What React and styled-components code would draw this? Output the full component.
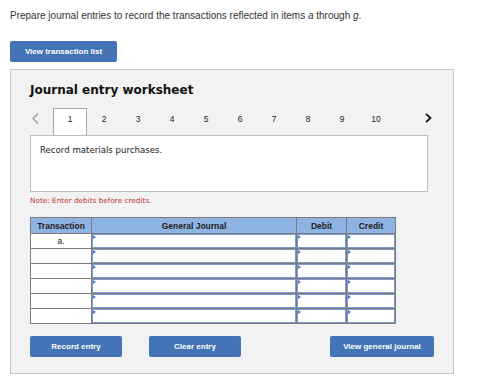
import React from "react";
import styled, { createGlobalStyle } from "styled-components";

const Global = createGlobalStyle`
  html, body { margin: 0; padding: 0; background: #fff; }
  body { font-family: "Liberation Sans", Arial, sans-serif; color: #222; }
  * { box-sizing: border-box; }
`;

const Page = styled.div`
  padding: 9px 0 0 10px;
  width: 490px;
`;

const Intro = styled.p`
  margin: 0;
  font-size: 10px;
  line-height: 13px;
  color: #333;
  em { font-style: italic; }
`;

const Button = styled.button`
  display: flex;
  align-items: center;
  justify-content: center;
  width: ${(p) => p.$w}px;
  height: 21px;
  padding: 0;
  border: none;
  border-radius: 2px;
  background: #4574b6;
  color: #fff;
  font-family: "Liberation Sans", Arial, sans-serif;
  font-weight: bold;
  font-size: 8px;
  cursor: pointer;
`;

const TopButton = styled(Button)`
  margin-top: 19px;
`;

const Panel = styled.section`
  margin-top: 7px;
  width: 444px;
  height: 305px;
  border: 1px solid #c6c6c6;
  background: #f2f2f2;
  padding: 12px 19px 0 19px;
  display: flex;
  flex-direction: column;
`;

const Title = styled.h2`
  margin: 0;
  font-family: "DejaVu Sans", Verdana, sans-serif;
  font-weight: bold;
  font-size: 12px;
  line-height: 16px;
  color: #111;
`;

const TabRow = styled.div`
  margin-top: 10px;
  display: flex;
  height: 27px;
`;

const Arrow = styled.div`
  width: ${(p) => p.$w}px;
  display: flex;
  align-items: flex-start;
  padding-top: 5px;
  justify-content: ${(p) => (p.$right ? "flex-end" : "flex-start")};
  padding-left: ${(p) => (p.$right ? 0 : 2)}px;
  padding-right: ${(p) => (p.$right ? 2 : 0)}px;
  margin-left: ${(p) => (p.$right ? "auto" : 0)};
`;

const Tab = styled.div`
  width: 34px;
  height: 27px;
  display: flex;
  justify-content: center;
  padding-top: 4px;
  font-size: 8.5px;
  line-height: 12px;
  color: #222;
  background: ${(p) => (p.$active ? "#fff" : "transparent")};
  border: 1px solid ${(p) => (p.$active ? "#a9a9a9" : "transparent")};
  border-bottom: none;
`;

const Prompt = styled.div`
  width: 398px;
  height: 57px;
  background: #fff;
  border: 1px solid #bdbdbd;
  padding: 9px 0 0 9px;
  font-family: "DejaVu Sans", Verdana, sans-serif;
  font-size: 8.6px;
  line-height: 11px;
  color: #222;
`;

const Note = styled.div`
  margin-top: 4px;
  font-family: "DejaVu Sans", Verdana, sans-serif;
  font-size: 7.3px;
  line-height: 10px;
  color: #c0392b;
`;

const Grid = styled.div`
  margin-top: 11px;
  display: grid;
  grid-template-columns: 60px 204px 49px 48px;
  grid-template-rows: 15px repeat(6, 14px);
  gap: 1px;
  padding: 1px;
  width: 366px;
  background: #7b7b7b;
`;

const Head = styled.div`
  background: #8db3e2;
  display: flex;
  align-items: center;
  justify-content: center;
  font-weight: bold;
  font-size: 8.5px;
  color: #222;
`;

const TxCell = styled.div`
  background: #fff;
  display: flex;
  align-items: center;
  justify-content: center;
  font-size: 8.5px;
  color: #222;
`;

const InputCell = styled.div`
  position: relative;
  background: #fff;
  border: 1px solid #7d9ccd;
  &::before {
    content: "";
    position: absolute;
    left: 0;
    top: 0;
    width: 0;
    height: 0;
    border-top: 2px solid transparent;
    border-bottom: 2px solid transparent;
    border-left: 3px solid #4a7cc9;
  }
`;

const Actions = styled.div`
  margin-top: 12px;
  display: flex;
  gap: 27px;
`;

const Spacer = styled.div`
  flex: 1;
`;

const LeftChevron = () => (
  <svg width="7" height="11" viewBox="0 0 7 11">
    <path d="M6 0.5 L1 5.5 L6 10.5" fill="none" stroke="#9a9a9a" strokeWidth="1.2" />
  </svg>
);

const RightChevron = () => (
  <svg width="7" height="10" viewBox="0 0 7 10">
    <path d="M1 0.8 L5.5 5 L1 9.2" fill="none" stroke="#111" strokeWidth="1.8" />
  </svg>
);

const rows = ["a.", "", "", "", "", ""];

export default function App() {
  return (
    <>
      <Global />
      <Page>
        <Intro>
          Prepare journal entries to record the transactions reflected in items <em>a</em> through <em>g</em>.
        </Intro>
        <TopButton $w={107}>View transaction list</TopButton>
        <Panel>
          <Title>Journal entry worksheet</Title>
          <TabRow>
            <Arrow $w={23}>
              <LeftChevron />
            </Arrow>
            {[1, 2, 3, 4, 5, 6, 7, 8, 9, 10].map((n) => (
              <Tab key={n} $active={n === 1}>
                {n}
              </Tab>
            ))}
            <Arrow $w={20} $right>
              <RightChevron />
            </Arrow>
          </TabRow>
          <Prompt>Record materials purchases.</Prompt>
          <Note>Note: Enter debits before credits.</Note>
          <Grid>
            <Head>Transaction</Head>
            <Head>General Journal</Head>
            <Head>Debit</Head>
            <Head>Credit</Head>
            {rows.map((r, i) => (
              <React.Fragment key={i}>
                <TxCell>{r}</TxCell>
                <InputCell />
                <InputCell />
                <InputCell />
              </React.Fragment>
            ))}
          </Grid>
          <Actions>
            <Button $w={92}>Record entry</Button>
            <Button $w={92}>Clear entry</Button>
            <Spacer />
            <Button $w={104}>View general journal</Button>
          </Actions>
        </Panel>
      </Page>
    </>
  );
}
